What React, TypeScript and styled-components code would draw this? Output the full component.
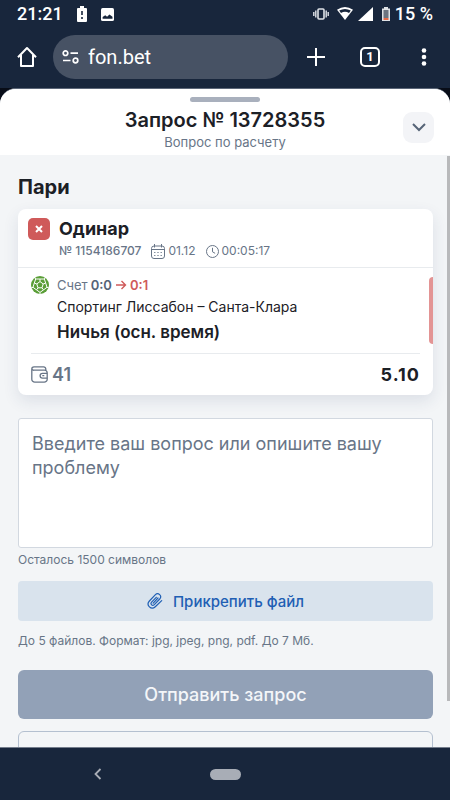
import React from "react";
import styled, { createGlobalStyle } from "styled-components";

const color = {
  navy: "#18263c",
  pill: "#475264",
  page: "#f3f5f7",
  ink: "#1c2026",
  muted: "#687587",
  red: "#cf5a5a",
  line: "#e8ebee",
  blue: "#1f5fb4",
};

const GlobalStyle = createGlobalStyle`
  * { box-sizing: border-box; }
  body { margin: 0; background: ${color.navy}; font-family: Inter, "Noto Sans", sans-serif; color: ${color.ink}; }
  button, input, textarea { font-family: inherit; }
  button { border: 0; padding: 0; background: none; cursor: pointer; }
  h1, h2, h3, p { margin: 0; }
  svg { display: block; flex: none; }
`;

const Screen = styled.div`
  display: flex;
  flex-direction: column;
  height: 100vh;
  overflow: hidden;
  background: ${color.navy};
`;

const StatusBar = styled.header`
  display: flex;
  align-items: center;
  justify-content: space-between;
  height: 28px;
  padding: 0 17px;
  color: #fff;
  font: 500 18px/28px Roboto, sans-serif;
`;

const StatusGroup = styled.div<{ $gap: number }>`
  display: flex;
  align-items: center;
  gap: ${(p) => p.$gap}px;
`;

const BrowserBar = styled.div`
  display: flex;
  align-items: center;
  height: 60px;
  padding: 0 16px 2px 17px;
  gap: 16px;
  color: #fff;
`;

const BarButton = styled.button`
  display: flex;
  align-items: center;
  justify-content: center;
  width: 20px;
  height: 40px;
  color: #fff;
`;

const BarActions = styled.div`
  display: flex;
  gap: 34px;
  margin-left: 2px;
`;

const AddressPill = styled.label`
  display: flex;
  flex: 1;
  align-items: center;
  gap: 9px;
  min-width: 0;
  height: 44px;
  padding: 0 9px;
  border-radius: 22px;
  background: ${color.pill};
`;

const AddressInput = styled.input`
  flex: 1;
  min-width: 0;
  padding: 0;
  border: 0;
  outline: 0;
  background: none;
  color: #fff;
  && { font: 400 20px/28px Roboto, sans-serif; }
`;

const TabsGlyph = styled.span`
  display: flex;
  flex: none;
  align-items: center;
  justify-content: center;
  width: 20px;
  height: 20px;
  border: 2px solid #fff;
  border-radius: 5px;
  font: 700 13px/16px Roboto, sans-serif;
`;

const SheetBackdrop = styled.div`
  display: flex;
  flex: 1;
  min-height: 0;
  background: #080d18;
`;

const Sheet = styled.main`
  display: flex;
  flex: 1;
  flex-direction: column;
  min-width: 0;
  overflow: hidden;
  border-top: 1px solid #5b6678;
  border-radius: 16px 16px 0 0;
  background: ${color.page};
`;

const SheetHeader = styled.div`
  display: grid;
  grid-template-columns: 31px 1fr 31px;
  align-items: center;
  padding: 8px 16px 4px;
  background: #fff;
`;

const Grabber = styled.div`
  grid-column: 1 / -1;
  justify-self: center;
  width: 70px;
  height: 5px;
  border-radius: 3px;
  background: #a9b0bd;
`;

const HeaderText = styled.div`
  grid-column: 2;
  padding-top: 5px;
  text-align: center;
`;

const SheetTitle = styled.h1`
  font-size: 20px;
  font-weight: 600;
  line-height: 26px;
`;

const SheetSubtitle = styled.p`
  font-size: 13px;
  line-height: 18px;
  color: ${color.muted};
`;

const CollapseButton = styled.button`
  display: flex;
  align-items: center;
  justify-content: center;
  width: 31px;
  height: 31px;
  margin-top: 2px;
  border-radius: 9px;
  background: #f3f4f7;
  color: #566477;
`;

const ScrollFrame = styled.div`
  position: relative;
  flex: 1;
  min-height: 0;
`;

const ScrollArea = styled.div`
  height: 100%;
  overflow-y: auto;
  padding: 19px 17px 24px 18px;
  scrollbar-width: none;
`;

const ScrollThumb = styled.div`
  position: absolute;
  top: 1px;
  right: 0;
  width: 3px;
  height: 92%;
  background: #b8b9bb;
`;

const SectionTitle = styled.h2`
  font-size: 20px;
  font-weight: 700;
  line-height: 26px;
`;

const BetCard = styled.article`
  margin-top: 9px;
  border-radius: 8px;
  background: #fff;
  box-shadow: 0 6px 16px rgba(40, 55, 100, 0.11);
`;

const BetHead = styled.div`
  display: grid;
  grid-template-columns: 22px 1fr;
  column-gap: 9px;
  align-items: center;
  padding: 8px 10px 6px;
  border-bottom: 1px solid ${color.line};
`;

const LossBadge = styled.span`
  display: flex;
  align-items: center;
  justify-content: center;
  width: 22px;
  height: 22px;
  border-radius: 5px;
  background: ${color.red};
`;

const BetTitle = styled.h3`
  font-size: 18px;
  font-weight: 700;
  line-height: 24px;
`;

const MetaRow = styled.div`
  display: flex;
  grid-column: 2;
  align-items: center;
  gap: 10px;
  font-size: 12px;
  line-height: 20px;
  color: ${color.muted};
`;

const MetaItem = styled.span<{ $strong?: boolean }>`
  display: flex;
  align-items: center;
  gap: 3px;
  font-weight: ${(p) => (p.$strong ? 500 : 400)};
`;

const EventRow = styled.div`
  display: grid;
  grid-template-columns: 18px 1fr 4px;
  column-gap: 8px;
  padding: 8px 0 8px 13px;
`;

const EventText = styled.div`
  display: flex;
  flex-direction: column;
`;

const Score = styled.p`
  display: flex;
  align-items: center;
  gap: 3px;
  font-size: 13px;
  line-height: 18px;
  color: ${color.muted};
`;

const ScoreValue = styled.b<{ $changed?: boolean }>`
  font-weight: 600;
  color: ${(p) => (p.$changed ? color.red : "#566477")};
`;

const Teams = styled.p`
  font-size: 14px;
  line-height: 25px;
`;

const Outcome = styled.p`
  font-size: 17px;
  font-weight: 600;
  line-height: 26px;
`;

const ResultStripe = styled.span`
  height: 67px;
  margin-top: 1px;
  border-radius: 4px 0 0 4px;
  background: #e39494;
`;

const BetFooter = styled.div`
  display: flex;
  align-items: center;
  justify-content: space-between;
  height: 42px;
  margin: 0 13px;
  border-top: 1px solid ${color.line};
  font-size: 18px;
  font-weight: 600;
`;

const Stake = styled.span`
  display: flex;
  align-items: center;
  gap: 4px;
  color: ${color.muted};
`;

const Odds = styled.span`
  font-weight: 700;
  letter-spacing: 1px;
`;

const Question = styled.textarea`
  display: block;
  width: 100%;
  height: 130px;
  margin-top: 23px;
  padding: 13px;
  resize: none;
  outline: 0;
  border: 1px solid #d2d8e0;
  border-radius: 3px;
  background: #fff;
  font-size: 18px;
  line-height: 24px;
  color: ${color.ink};
  &::placeholder { color: ${color.muted}; opacity: 1; }
`;

const Hint = styled.p`
  font-size: 12px;
  line-height: 18px;
  padding-top: 3px;
  color: ${color.muted};
`;

const AttachButton = styled.button`
  display: flex;
  align-items: center;
  justify-content: center;
  gap: 10px;
  width: 100%;
  height: 40px;
  margin: 12px 0 8px;
  border-radius: 4px;
  background: #d9e3ed;
  color: ${color.blue};
  font-size: 15px;
  font-weight: 500;
`;

const SubmitButton = styled.button`
  display: block;
  width: 100%;
  height: 49px;
  margin-top: 20px;
  border-radius: 6px;
  background: #92a1b7;
  color: #f4f6f9;
  font-size: 18px;
  font-weight: 500;
`;

const SecondaryButton = styled.button`
  display: block;
  width: 100%;
  height: 49px;
  margin-top: 12px;
  border: 1px solid #b4c0d0;
  border-radius: 6px;
`;

const SystemNav = styled.nav`
  display: grid;
  grid-template-columns: 1fr auto 1fr;
  align-items: center;
  height: 53px;
  flex: none;
  border-top: 1px solid #747d8c;
  background: ${color.navy};
`;

const BackButton = styled.button`
  justify-self: center;
  margin-right: 14px;
  padding: 8px;
  color: #a8adb6;
`;

const HomeButton = styled.button`
  width: 31px;
  height: 11px;
  border-radius: 6px;
  background: #a8adb6;
`;

const StatusLeftIcons = () => (
  <>
    <svg width="10" height="16" viewBox="0 0 10 16">
      <path d="M3 0h4v2h2a1 1 0 0 1 1 1v12a1 1 0 0 1-1 1H1a1 1 0 0 1-1-1V3a1 1 0 0 1 1-1h2z" fill="#fff" />
      <path d="M5 5v4M5 11v2" stroke={color.navy} strokeWidth="1.6" />
    </svg>
    <svg width="13" height="13" viewBox="0 0 12 12">
      <rect width="12" height="12" rx="1.5" fill="#fff" />
      <path d="M1.5 10V8.200l2.400-1.600 1.700 1.500 2.200-2L10.600 8v2z" fill={color.navy} />
    </svg>
  </>
);

const StatusRightIcons = () => (
  <svg width="78" height="16" viewBox="0 0 78 16" fill="#fff">
    <g fill="none" stroke="#dfe3e8" strokeWidth="1.4">
      <rect x="5" y="3" width="6" height="10" rx="1" strokeWidth="1.6" />
      <path d="M2.8 4.5v7M.8 6v4M13.2 4.5v7M15.2 6v4" />
    </g>
    <path d="M24 3.7Q32 -1.6 40 3.7L32 14z" />
    <path d="M26.2 4.6Q32 1.2 37.8 4.6L36 7Q32 4.6 28 7z" fill={color.navy} />
    <path d="M60 1v14H45z" />
    <path d="M71 1h4v1.5h2V15h-8V2.5h2z" fill="#dfe2e6" />
    <path d="M70.5 4h5v8h-5z" fill="#6c7480" />
    <path d="M70.5 12h5v2h-5z" fill="#e66a48" />
  </svg>
);

const HomeIcon = () => (
  <svg width="20" height="22" viewBox="0 0 20 22" fill="none" stroke="#fff" strokeWidth="2" strokeLinejoin="round">
    <path d="M1 11.2L10 2l9 9.200M4 9v11h12V9" />
  </svg>
);

const SiteSettingsIcon = () => (
  <svg width="17" height="14" viewBox="0 0 17 14" fill="none" stroke="#fff" strokeWidth="1.7">
    <circle cx="3.500" cy="3.200" r="2.300" />
    <circle cx="13.500" cy="10.500" r="2.300" />
    <path d="M8.500 3.200H16M1 10.500h7.500" />
  </svg>
);

const PlusIcon = () => (
  <svg width="18" height="18" viewBox="0 0 18 18" stroke="#fff" strokeWidth="2">
    <path d="M9 0v18M0 9h18" />
  </svg>
);

const MenuIcon = () => (
  <svg width="6" height="20" viewBox="0 0 6 20" fill="#fff">
    <circle cx="3" cy="3.500" r="2.300" />
    <circle cx="3" cy="10" r="2.300" />
    <circle cx="3" cy="16.500" r="2.300" />
  </svg>
);

const ChevronDown = () => (
  <svg width="14" height="9" viewBox="0 0 14 9" fill="none" stroke="currentColor" strokeWidth="2">
    <path d="M1 1l6 6 6-6" />
  </svg>
);

const CrossIcon = () => (
  <svg width="8" height="8" viewBox="0 0 8 8" stroke="#fff" strokeWidth="2">
    <path d="M1 1l6 6M7 1L1 7" />
  </svg>
);

const CalendarIcon = () => (
  <svg width="14" height="15" viewBox="0 0 14 15" fill="none" stroke="currentColor" strokeWidth="1">
    <rect x=".5" y="2" width="13" height="12.500" rx="2.500" />
    <path d="M.5 5.500h13M3.500 0v3.500M10.500 0v3.500" />
    <path d="M3.200 8.500h8M3.200 11.500h8" strokeDasharray="1.200 2" />
  </svg>
);

const ClockIcon = () => (
  <svg width="13" height="13" viewBox="0 0 13 13" fill="none" stroke="currentColor" strokeWidth="1">
    <circle cx="6.500" cy="6.500" r="6" />
    <path d="M6.500 2.800v4l2.600 1.500" />
  </svg>
);

const BallIcon = () => (
  <svg width="18" height="18" viewBox="0 0 18 18">
    <circle cx="9" cy="9" r="9" fill="#5a9e37" />
    <g fill="none" stroke="#fff" strokeWidth="1">
      <path d="M9 5.600l3.200 2.300-1.200 3.900H7L5.800 7.900z" />
      <path d="M9 5.600V3M12.200 7.900l2.500-.8M11 11.800l1.500 2.100M7 11.800l-1.500 2.100M5.800 7.900l-2.500-.8" />
      <path d="M9 3l4.300 0 1.400 4.100L16 11.300l-3.500 2.600L9 16.400l-3.500-2.500L2 11.300l1.300-4.200L4.700 3z" />
      <path d="M13.300 3l1.200-1.700M16 11.300l1.800.6M9 16.400V18M2 11.300l-1.800.6M4.700 3L3.500 1.300" />
    </g>
  </svg>
);

const ArrowIcon = () => (
  <svg width="12" height="10" viewBox="0 0 12 10" fill="none" stroke={color.red} strokeWidth="1.400">
    <path d="M1 5h9.500M6.500 1l4 4-4 4" />
  </svg>
);

const WalletIcon = () => (
  <svg width="17" height="17" viewBox="0 0 17 17" fill="none" stroke="currentColor" strokeWidth="1.300">
    <path d="M14.800 4.200V3A2.200 2.200 0 0 0 12.600.8H3A2.200 2.200 0 0 0 .8 3v10.200a3 3 0 0 0 3 3h9.400a3 3 0 0 0 3-3V7a2.800 2.800 0 0 0-2.800-2.800H3A2 2 0 0 1 .8 2.600" />
    <path d="M16.200 7.300h-4.700a2.400 2.400 0 0 0 0 4.800h4.700M11.300 9.700h2" />
  </svg>
);

const ClipIcon = () => (
  <svg width="16" height="16" viewBox="0 0 16 16" fill="none" stroke="currentColor" strokeWidth="1.200" strokeLinecap="round">
    <path d="M14.700 7.600L8.300 13.700c-4 3.700-9.700-1.500-5.900-5.700l5.800-6.100c3-3 7.300 1 4.500 4.100L7.300 11.600c-1.900 1.900-4.400-.5-2.700-2.400L9.300 4.300" />
    <path d="M11 5L6.200 10.200" />
  </svg>
);

const BackIcon = () => (
  <svg width="8" height="12" viewBox="0 0 8 12" fill="none" stroke="currentColor" strokeWidth="1.800">
    <path d="M6.500 1l-5 5 5 5" />
  </svg>
);

export default function App() {
  return (
    <Screen>
      <GlobalStyle />
      <StatusBar>
        <StatusGroup $gap={14}>
          <span>21:21</span>
          <StatusLeftIcons />
        </StatusGroup>
        <StatusGroup $gap={4}>
          <StatusRightIcons />
          <span>15 %</span>
        </StatusGroup>
      </StatusBar>
      <BrowserBar>
        <BarButton aria-label="Домой"><HomeIcon /></BarButton>
        <AddressPill>
          <SiteSettingsIcon />
          <AddressInput aria-label="Адрес сайта" defaultValue="fon.bet" />
        </AddressPill>
        <BarActions>
          <BarButton aria-label="Новая вкладка"><PlusIcon /></BarButton>
          <BarButton aria-label="Вкладки"><TabsGlyph>1</TabsGlyph></BarButton>
          <BarButton aria-label="Меню"><MenuIcon /></BarButton>
        </BarActions>
      </BrowserBar>
      <SheetBackdrop>
        <Sheet>
          <SheetHeader>
            <Grabber />
            <HeaderText>
              <SheetTitle>Запрос № 13728355</SheetTitle>
              <SheetSubtitle>Вопрос по расчету</SheetSubtitle>
            </HeaderText>
            <CollapseButton aria-label="Свернуть"><ChevronDown /></CollapseButton>
          </SheetHeader>
          <ScrollFrame>
            <ScrollArea>
              <SectionTitle>Пари</SectionTitle>
              <BetCard>
                <BetHead>
                  <LossBadge><CrossIcon /></LossBadge>
                  <BetTitle>Одинар</BetTitle>
                  <MetaRow>
                    <MetaItem $strong>№ 1154186707</MetaItem>
                    <MetaItem><CalendarIcon />01.12</MetaItem>
                    <MetaItem><ClockIcon />00:05:17</MetaItem>
                  </MetaRow>
                </BetHead>
                <EventRow>
                  <BallIcon />
                  <EventText>
                    <Score>
                      Счет <ScoreValue>0:0</ScoreValue>
                      <ArrowIcon />
                      <ScoreValue $changed>0:1</ScoreValue>
                    </Score>
                    <Teams>Спортинг Лиссабон – Санта-Клара</Teams>
                    <Outcome>Ничья (осн. время)</Outcome>
                  </EventText>
                  <ResultStripe />
                </EventRow>
                <BetFooter>
                  <Stake><WalletIcon />41</Stake>
                  <Odds>5.10</Odds>
                </BetFooter>
              </BetCard>
              <Question aria-label="Ваш вопрос" placeholder="Введите ваш вопрос или опишите вашу проблему" />
              <Hint>Осталось 1500 символов</Hint>
              <AttachButton><ClipIcon />Прикрепить файл</AttachButton>
              <Hint>До 5 файлов. Формат: jpg, jpeg, png, pdf. До 7 Мб.</Hint>
              <SubmitButton>Отправить запрос</SubmitButton>
              <SecondaryButton aria-label="Отмена" />
            </ScrollArea>
            <ScrollThumb />
          </ScrollFrame>
        </Sheet>
      </SheetBackdrop>
      <SystemNav>
        <BackButton aria-label="Назад"><BackIcon /></BackButton>
        <HomeButton aria-label="Главный экран" />
      </SystemNav>
    </Screen>
  );
}
